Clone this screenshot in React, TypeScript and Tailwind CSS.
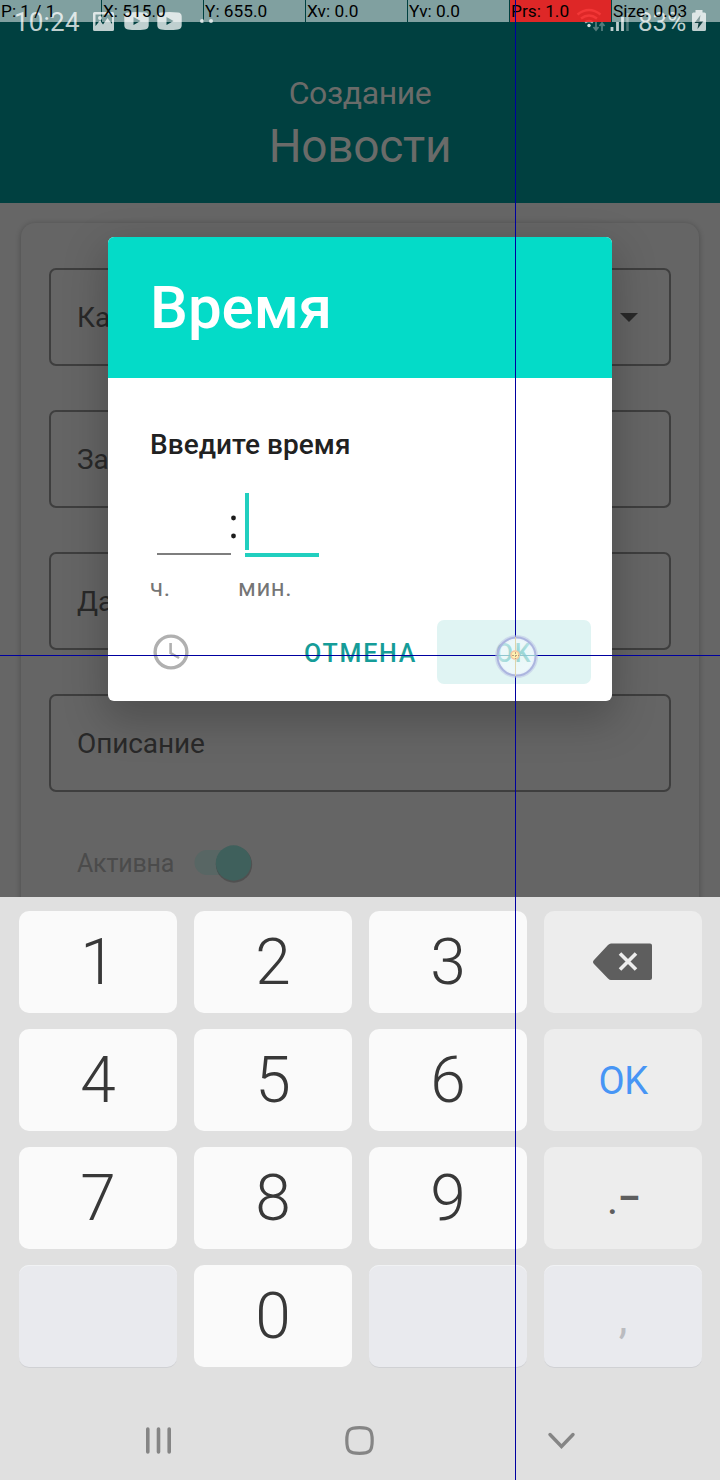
import React from "react";

const cells = ["P: 1 / 1", "X: 515.0", "Y: 655.0", "Xv: 0.0", "Yv: 0.0", "Prs: 1.0", "Size: 0.03"];

function StatusBar() {
  return (
    <div className="flex h-[44px] items-center justify-between pl-[14px] pr-[14px] text-[#bfcfcf]">
      <div className="flex items-center">
        <span className="w-[79px] pt-px text-[26px] leading-[43px] tracking-[0.2px]">10:24</span>
        <svg width="124" height="44" viewBox="93 0 124 44" fill="currentColor">
          <path fillRule="evenodd" d="M94.500 12h18a1.500 1.500 0 0 1 1.500 1.500v16a1.500 1.500 0 0 1-1.500 1.500h-18a1.500 1.500 0 0 1-1.500-1.500v-16a1.500 1.500 0 0 1 1.500-1.500zM95.500 26l4.500-5.500 3 4 4.500-6.500 4.500 6v-9.500H95.500zM100 16a2 2 0 1 1 0 4 2 2 0 0 1 0-4z" />
          <path fillRule="evenodd" d="M128 12.500q8-1 17 0 3.500.3 3.700 4v9q-.2 3.500-3.700 4-9 1-17 0-3.500-.5-3.700-4v-9q.2-3.700 3.700-4zM133.500 17v8l7-4z" />
          <path fillRule="evenodd" d="M161 12.500q8-1 17 0 3.500.3 3.700 4v9q-.2 3.500-3.700 4-9 1-17 0-3.500-.5-3.700-4v-9q.2-3.700 3.700-4zM166.500 17v8l7-4z" />
          <circle cx="202" cy="21" r="2" />
          <circle cx="211" cy="21" r="2" />
        </svg>
      </div>
      <div className="flex items-center">
        <svg width="62" height="44" viewBox="576 0 62 44" fill="none">
          <g stroke="#a0b5b5" strokeWidth="2.400">
            <path d="M577.500 14.500q11.500-9 23 0" />
            <path d="M581 18.500q8-6 16 0" />
            <path d="M585 22.500q4-3 8 0" />
          </g>
          <circle cx="589" cy="25.500" r="1.700" fill="#d5e0e0" />
          <path d="M596 22v8m-2.500-3 2.500 3 2.500-3M602 31v-8m-2.500 3 2.500-3 2.500 3" stroke="#527c7c" strokeWidth="1.800" />
          <path d="M612 31v-4M617.500 31v-9M622.500 31V17" stroke="#bfcfcf" strokeWidth="2.800" />
          <path d="M627.500 31V13" stroke="#4c7777" strokeWidth="2.500" />
        </svg>
        <span className="w-[54px] pt-px text-[26px] leading-[43px] tracking-[0px]">83%</span>
        <svg width="14" height="44" viewBox="692 0 14 44">
          <path d="M695.500 10h7v2.500h2a1.500 1.500 0 0 1 1.500 1.500v15.500a1.500 1.500 0 0 1-1.500 1.500h-11a1.500 1.500 0 0 1-1.500-1.500V14a1.500 1.500 0 0 1 1.500-1.500h2z" fill="#bfcfcf" />
          <path d="m700.500 15-6 8h4l-1 6 6-8h-4z" fill="#123f40" />
        </svg>
      </div>
    </div>
  );
}

function Field({ label, arrow }: { label: string; arrow?: boolean }) {
  return (
    <div className="flex h-[98px] items-center justify-between rounded-[7px] border-2 border-[#3e3e3e] pl-[26px] pr-[31px]">
      <span className="pt-[2px] text-[28px] leading-none tracking-[-0.1px] text-[#292929]">{label}</span>
      {arrow && (
        <svg width="18" height="9" viewBox="0 0 18 9">
          <path d="M0 0h18L9 9z" fill="#292929" />
        </svg>
      )}
    </div>
  );
}

function Dialog() {
  return (
    <div className="absolute left-[108px] top-[237px] flex h-[464px] w-[504px] flex-col overflow-hidden rounded-[6px] bg-white">
      <div className="flex h-[141px] items-center bg-[#04dbc8] pl-[42px] text-[60px] font-medium leading-[70px] text-white">
        Время
      </div>
      <div className="flex flex-col pl-[42px] pt-[47px]">
        <div className="text-[28px] font-medium leading-[40px] tracking-[0.05px] text-[#212121]">Введите время</div>
        <div className="mt-[28px] flex h-[64px] pl-[7px]">
          <div className="flex w-[74px] flex-col justify-end pb-[2px]">
            <div className="h-[2px] bg-[#7e7e7e]" />
          </div>
          <svg width="14" height="64" viewBox="0 0 14 64" fill="#1c1c1c">
            <circle cx="2.500" cy="25" r="2.400" />
            <circle cx="2.500" cy="43" r="2.400" />
          </svg>
          <div className="flex w-[74px] flex-col">
            <div className="h-[57px] w-[4px] bg-[#21cfbf]" />
            <div className="mt-[3px] h-[4px] bg-[#21cfbf]" />
          </div>
        </div>
        <div className="mt-[17px] flex h-[28px] text-[24px] leading-[28px] tracking-[0.6px] text-[#757575]">
          <span className="w-[88px]">ч.</span>
          <span>мин.</span>
        </div>
      </div>
      <div className="mt-[18px] flex h-[64px] items-center pl-[45px] pr-[21px]">
        <svg width="36" height="36" viewBox="0 0 36 36" fill="none" stroke="#b0b0b0">
          <circle cx="18" cy="18" r="15.900" strokeWidth="3.400" />
          <path d="M17.600 9v10l8.500 5" strokeWidth="2.600" />
        </svg>
        <span className="ml-[115px] w-[133px] pt-[4px] text-[25px] font-medium leading-[60px] tracking-[1.800px] text-[#159c98]">ОТМЕНА</span>
        <span className="flex h-[64px] w-[154px] items-center justify-center rounded-[7px] bg-[#e0f4f3] pt-[4px] text-[25px] font-medium tracking-[1.800px] text-[#4fb8b3]">
          OK
        </span>
      </div>
    </div>
  );
}

const keyBase = "flex h-[102px] items-center justify-center rounded-[10px]";

function Digit({ children }: { children: string }) {
  return <div className={keyBase + " bg-[#fafafa] pt-[2px] text-[64px] font-light leading-none text-[#383838]"}>{children}</div>;
}

function Keyboard() {
  return (
    <div className="h-[583px] bg-[#e0e0e0] pt-[14px]">
      <div className="grid grid-cols-4 gap-x-[17px] gap-y-[16px] pl-[19px] pr-[18px]">
        <Digit>1</Digit>
        <Digit>2</Digit>
        <Digit>3</Digit>
        <div className={keyBase + " bg-[#ededed]"}>
          <svg width="60" height="38" viewBox="0 0 60 38">
            <path d="M18 .5H57q2 0 2 2v32.500q0 2-2 2H18q-1.500 0-3-1.500L1 21q-2-2 0-4L15 2q1.500-1.500 3-1.500z" fill="#5e5e5e" />
            <path d="m27 10.500 16 16M43 10.500 27 26.500" stroke="#ededed" strokeWidth="3.600" />
          </svg>
        </div>
        <Digit>4</Digit>
        <Digit>5</Digit>
        <Digit>6</Digit>
        <div className={keyBase + " bg-[#ededed] pt-px text-[38px] leading-none tracking-[-0.5px] text-[#4795f5]"}>OK</div>
        <Digit>7</Digit>
        <Digit>8</Digit>
        <Digit>9</Digit>
        <div className={keyBase + " bg-[#ededed] text-[44px] leading-none text-[#5e5e5e]"}>
          <span className="pt-[2px]">.</span>
          <span className="-mt-[3px] text-[34px] font-black">–</span>
        </div>
        <div className={keyBase + " bg-[#e9eaee] shadow-[inset_0_1px_0_#f1f2f4,0_1px_0_#d0d1d4]"} />
        <Digit>0</Digit>
        <div className={keyBase + " bg-[#e9eaee] shadow-[inset_0_1px_0_#f1f2f4,0_1px_0_#d0d1d4]"} />
        <div className={keyBase + " bg-[#e9eaee] pt-[3px] text-[44px] leading-none text-[#bbbcc0] shadow-[inset_0_1px_0_#f1f2f4,0_1px_0_#d0d1d4]"}>,</div>
      </div>
      <div className="flex items-center pl-[144px] pt-[53px]">
        <svg width="28" height="40" viewBox="0 0 28 40" stroke="#858585" strokeWidth="3.600" strokeLinecap="round">
          <path d="M3.800 9v23M14.500 9v23M25.200 9v23" />
        </svg>
        <svg className="ml-[173px]" width="30" height="40" viewBox="0 0 30 40" fill="none" stroke="#858585" strokeWidth="3.200">
          <path d="M14.500 7.700C25 7.700 27.200 10 27.200 20.500S25 33.300 14.500 33.300 1.800 31 1.800 20.500 4 7.700 14.500 7.700z" />
        </svg>
        <svg className="ml-[171px]" width="32" height="40" viewBox="0 0 32 40" fill="none" stroke="#858585" strokeWidth="3.400" strokeLinecap="round">
          <path d="m4 14.500 11.500 12 11.500-12" />
        </svg>
      </div>
    </div>
  );
}

function PointerOverlay() {
  return (
    <div className="absolute inset-0">
      <div className="flex h-[22px] gap-px text-[17.300px] leading-[22px] text-black">
        {cells.map((text, i) => (
          <div
            key={text}
            className={i === 5 ? "w-[101px] whitespace-nowrap bg-[#ff2424de] pl-px" : i === 6 ? "flex-1 whitespace-nowrap bg-white/50 pl-px" : "w-[101px] whitespace-nowrap bg-white/50 pl-px"}
          >
            {text}
          </div>
        ))}
      </div>
      <svg className="absolute inset-0" width="720" height="1480" viewBox="0 0 720 1480" fill="none">
        <defs>
          <radialGradient id="touch">
            <stop offset="0" stopColor="#fff3dc" stopOpacity=".5" />
            <stop offset=".35" stopColor="#f7fcff" stopOpacity=".45" />
            <stop offset=".85" stopColor="#f5fbff" stopOpacity=".6" />
            <stop offset="1" stopColor="#e0e5f8" stopOpacity=".7" />
          </radialGradient>
        </defs>
        <g fill="#0000a0">
          <rect x="0" y="655" width="497" height="1" />
          <rect x="536" y="655" width="184" height="1" />
          <rect x="515" y="0" width="1" height="637" />
          <rect x="515" y="676" width="1" height="804" />
        </g>
        <circle cx="516.500" cy="656.500" r="20.500" stroke="#b9c0e6" strokeOpacity=".5" strokeWidth="2" />
        <circle cx="516.500" cy="656.500" r="19" fill="url(#touch)" stroke="#acb5df" strokeWidth="2" />
        <path d="M515.500 637v39" stroke="#ddd4ad" />
        <path d="M497 655.500h39" stroke="#8fc5cf" />
        <circle cx="515" cy="655" r="4" fill="#fff1b0" stroke="#f4c7a0" strokeWidth="1.600" />
        <path d="M512 655.500h7M515.500 652v7" stroke="#b8a080" strokeDasharray="2 1" />
      </svg>
    </div>
  );
}

export default function App() {
  return (
    <div className="relative h-[1480px] w-[720px] overflow-hidden bg-[#666] font-['Roboto',sans-serif]">
      <div className="flex h-[203px] flex-col bg-[#004040]">
        <StatusBar />
        <div className="mt-[29px] text-center text-[32px] leading-[40px] tracking-[-0.4px] text-[#6a6b69]">Создание</div>
        <div className="mt-[5px] text-center text-[46px] leading-[56px] tracking-[-0.25px] text-[#6a6b69]">Новости</div>
      </div>
      <div className="h-[694px] overflow-hidden px-[21px] pt-[20px]">
        <div className="flex h-[720px] flex-col gap-[44px] rounded-[14px] bg-[#656565] px-[28px] pt-[45px] shadow-[0_1px_5px_1px_rgba(0,0,0,0.2)]">
          <Field label="Категория" arrow />
          <Field label="Заголовок" />
          <Field label="Дата" />
          <Field label="Описание" />
          <div className="flex h-[53px] items-center pl-[28px]">
            <span className="w-[115px] pt-[2px] text-[25px] leading-none tracking-[-0.2px] text-[#4b4b4b]">Активна</span>
            <svg width="66" height="50" viewBox="0 0 66 50">
              <rect x="2.500" y="12" width="50" height="25" rx="12.500" fill="#586664" />
              <circle cx="42" cy="26.500" r="18.200" fill="#000" fillOpacity=".2" />
              <circle cx="41.500" cy="25" r="17.700" fill="#3f605c" />
            </svg>
          </div>
        </div>
      </div>
      <Keyboard />
      <div className="absolute left-[108px] top-[237px] h-[464px] w-[504px] rounded-[6px] shadow-[0_16px_42px_4px_rgba(0,0,0,0.22)]" />
      <Dialog />
      <PointerOverlay />
    </div>
  );
}
